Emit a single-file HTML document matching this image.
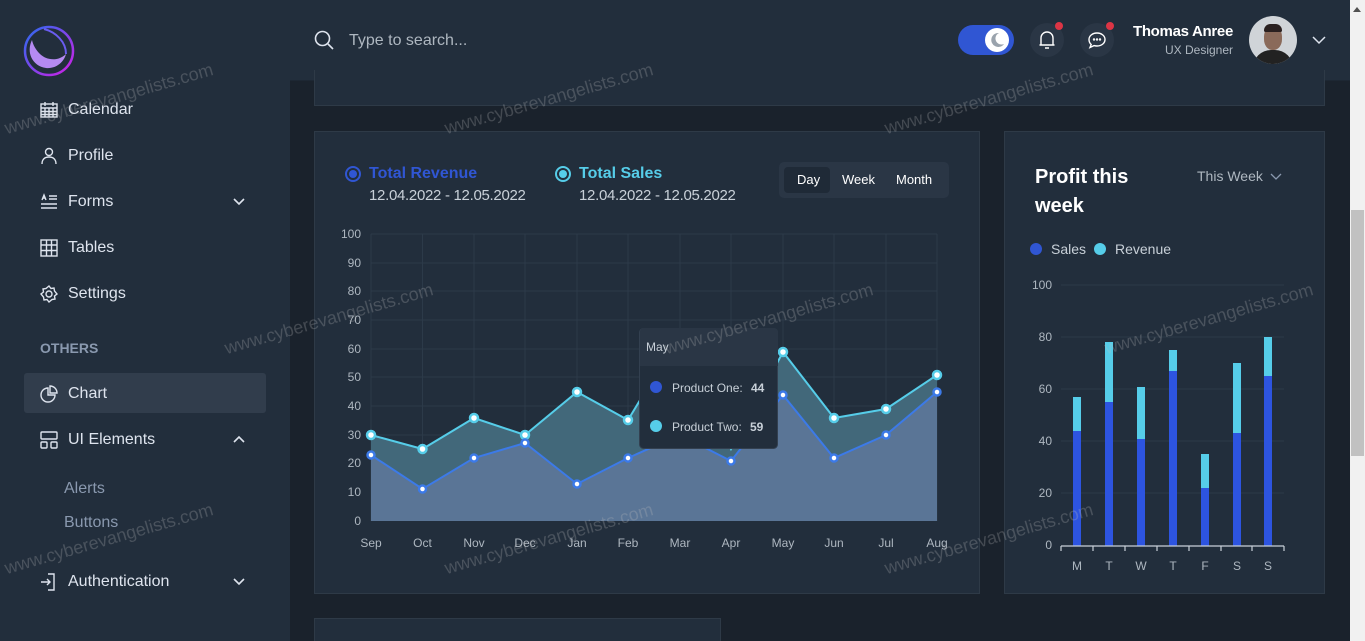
<!DOCTYPE html>
<html><head><meta charset="utf-8"><style>
*{margin:0;padding:0;box-sizing:border-box}
html{width:1365px;height:641px;overflow:hidden}
body{width:1365px;height:641px;overflow:hidden;background:#1a222c;font-family:"Liberation Sans",sans-serif;position:relative;color:#dee4ee}
.abs{position:absolute}
#side{left:0;top:0;width:290px;height:641px;background:#222e3c}
#head{left:290px;top:0;width:1060px;height:80px;background:#222e3c;box-shadow:0 1px 0 #1d2733}
.card{position:absolute;background:#222e3c;border:1px solid #2e3a47}
.nav{position:absolute;left:40px;font-size:16px;color:#dee4ee;display:flex;align-items:center;gap:10px}
.nav svg{width:18px;height:18px}
.chev{position:absolute;left:232px;width:14px;height:14px}
.wm{position:absolute;color:rgba(190,190,190,.25);font-size:18px;transform:rotate(-16deg);transform-origin:left bottom;white-space:nowrap}
</style></head><body>
<div id="side" class="abs"></div>
<div id="head" class="abs"></div>
<svg class="abs" style="left:22px;top:24px" width="54" height="54" viewBox="0 0 54 54">
<defs><linearGradient id="lg" x1="0" y1="0" x2="1" y2="1"><stop offset="0" stop-color="#2a6cf0"/><stop offset="1" stop-color="#d21fe6"/></linearGradient></defs>
<circle cx="27" cy="27" r="24" fill="none" stroke="url(#lg)" stroke-width="2.5"/>
<path d="M10 16 C4 28 10 42 24 44 C34 45 42 38 44 30 C36 38 24 36 18 30 C14 26 11 21 10 16Z" fill="#b58af2"/>
<path d="M22 5 C34 8 44 18 44 30" fill="none" stroke="#6a5cf0" stroke-width="2"/>
</svg>
<div class="nav" style="top:101px"><svg viewBox="0 0 18 18" fill="none" stroke="#dee4ee" stroke-width="1.4"><rect x="1" y="3" width="16" height="13"/><path d="M1 7h16M5 1v4M13 1v4M1 10.5h16M1 13.5h16M5 7v9M9 7v9M13 7v9"/></svg>Calendar</div>
<div class="nav" style="top:147px"><svg viewBox="0 0 18 18" fill="none" stroke="#dee4ee" stroke-width="1.4"><circle cx="9" cy="5" r="3.5"/><path d="M2 17c0-5 3-7 7-7s7 2 7 7"/></svg>Profile</div>
<div class="nav" style="top:193px"><svg viewBox="0 0 18 18" fill="none" stroke="#dee4ee" stroke-width="1.4"><path d="M2 7l2-5 2 5M3 5h2M9 3h8M9 6h8M1 11h16M1 15h16"/></svg>Forms</div>
<svg class="chev" style="top:194px" viewBox="0 0 14 14" fill="none" stroke="#dee4ee" stroke-width="1.6"><path d="M2 5l5 5 5-5"/></svg>
<div class="nav" style="top:239px"><svg viewBox="0 0 18 18" fill="none" stroke="#dee4ee" stroke-width="1.4"><rect x="1" y="1" width="16" height="16"/><path d="M1 6h16M1 11.5h16M6.5 1v16M11.5 1v16"/></svg>Tables</div>
<div class="nav" style="top:285px"><svg viewBox="0 0 18 18" fill="none" stroke="#dee4ee" stroke-width="1.4"><circle cx="9" cy="9" r="3"/><path d="M9 1l2 2.5 3-.5.5 3L17 9l-2.5 2 .5 3-3 .5L9 17l-2-2.5-3 .5-.5-3L1 9l2.5-2-.5-3 3-.5z"/></svg>Settings</div>
<div class="abs" style="left:40px;top:340px;font-size:14px;font-weight:bold;color:#8a99af">OTHERS</div>
<div class="abs" style="left:24px;top:373px;width:242px;height:40px;background:#313d4c;border-radius:3px"></div>
<div class="nav" style="top:385px"><svg viewBox="0 0 18 18" fill="none" stroke="#dee4ee" stroke-width="1.4"><path d="M8 3a7 7 0 1 0 7 7H8z"/><path d="M10 1a7 7 0 0 1 7 7h-7z"/></svg>Chart</div>
<div class="nav" style="top:431px"><svg viewBox="0 0 18 18" fill="none" stroke="#dee4ee" stroke-width="1.4"><rect x="1" y="1" width="16" height="7" rx="1"/><rect x="1" y="11" width="6" height="6" rx="1"/><rect x="11" y="11" width="6" height="6" rx="1"/></svg>UI Elements</div>
<svg class="chev" style="top:432px" viewBox="0 0 14 14" fill="none" stroke="#dee4ee" stroke-width="1.6"><path d="M2 10l5-5 5 5"/></svg>
<div class="abs" style="left:64px;top:480px;font-size:16px;color:#8a99af">Alerts</div>
<div class="abs" style="left:64px;top:514px;font-size:16px;color:#8a99af">Buttons</div>
<div class="nav" style="top:573px"><svg viewBox="0 0 18 18" fill="none" stroke="#dee4ee" stroke-width="1.4"><path d="M8 1h6v16H8M1 9h9M7 6l3 3-3 3"/></svg>Authentication</div>
<svg class="chev" style="top:574px" viewBox="0 0 14 14" fill="none" stroke="#dee4ee" stroke-width="1.6"><path d="M2 5l5 5 5-5"/></svg>

<svg class="abs" style="left:314px;top:30px" width="20" height="20" viewBox="0 0 20 20" fill="none" stroke="#dee4ee" stroke-width="1.6"><circle cx="8.5" cy="8.5" r="7"/><path d="M14 14l5 5"/></svg>
<div class="abs" style="left:349px;top:32px;font-size:16px;color:#aeb7c0">Type to search...</div>
<div class="abs" style="left:958px;top:25px;width:56px;height:30px;border-radius:15px;background:#3056d3"></div>
<div class="abs" style="left:985px;top:28px;width:24px;height:24px;border-radius:50%;background:#fff"></div>
<svg class="abs" style="left:989px;top:32px" width="16" height="16" viewBox="0 0 16 16"><path d="M10 1a7 7 0 1 0 5 11A6 6 0 0 1 10 1z" fill="#9aa3ad"/></svg>
<div class="abs" style="left:1030px;top:23px;width:34px;height:34px;border-radius:50%;background:#2a3645"></div>
<svg class="abs" style="left:1039px;top:30px" width="16" height="20" viewBox="0 0 16 20" fill="none" stroke="#fff" stroke-width="1.4"><path d="M2 15V8a6 6 0 0 1 12 0v7zM0.5 15h15M6 18h4"/></svg>
<div class="abs" style="left:1055px;top:22px;width:8px;height:8px;border-radius:50%;background:#dc3545"></div>
<div class="abs" style="left:1080px;top:23px;width:34px;height:34px;border-radius:50%;background:#2a3645"></div>
<svg class="abs" style="left:1088px;top:31px" width="18" height="18" viewBox="0 0 18 18" fill="none" stroke="#fff" stroke-width="1.4"><path d="M9 2c4.5 0 8 2.8 8 6.5S13.5 15 9 15c-1 0-2-.1-3-.4L2 16.5l1.2-3C1.8 12.3 1 10.5 1 8.5 1 4.8 4.5 2 9 2z"/><circle cx="6" cy="8.5" r=".5"/><circle cx="9" cy="8.5" r=".5"/><circle cx="12" cy="8.5" r=".5"/></svg>
<div class="abs" style="left:1106px;top:22px;width:8px;height:8px;border-radius:50%;background:#dc3545"></div>
<div class="abs" style="left:1080px;top:23px;width:153px;text-align:right;font-size:15px;font-weight:bold;color:#fff;letter-spacing:-0.3px">Thomas Anree</div>
<div class="abs" style="left:1100px;top:43px;width:133px;text-align:right;font-size:12px;color:#aeb7c0">UX Designer</div>
<div class="abs" style="left:1249px;top:16px;width:48px;height:48px;border-radius:50%;background:#d0d4d8;overflow:hidden">
<div class="abs" style="left:15px;top:10px;width:18px;height:24px;border-radius:45%;background:#8a6a5a"></div>
<div class="abs" style="left:15px;top:8px;width:18px;height:8px;border-radius:8px 8px 2px 2px;background:#2a2020"></div>
<div class="abs" style="left:4px;top:34px;width:40px;height:20px;border-radius:18px 18px 0 0;background:#222"></div></div>
<svg class="abs" style="left:1312px;top:34px" width="14" height="12" viewBox="0 0 14 12" fill="none" stroke="#dee4ee" stroke-width="1.5"><path d="M1 3l6 6 6-6"/></svg>

<div class="card" style="left:314px;top:70px;width:1011px;height:36px;border-top:none"></div>

<div class="card" style="left:314px;top:131px;width:666px;height:463px"></div>
<div class="abs" style="left:345px;top:166px;width:16px;height:16px;border-radius:50%;border:2px solid #3056d3"></div>
<div class="abs" style="left:349px;top:170px;width:8px;height:8px;border-radius:50%;background:#3056d3"></div>
<div class="abs" style="left:369px;top:165px;font-size:16px;font-weight:bold;color:#3056d3">Total Revenue</div>
<div class="abs" style="left:369px;top:187px;font-size:15px;color:#c8d0d8;letter-spacing:-0.3px">12.04.2022 - 12.05.2022</div>
<div class="abs" style="left:555px;top:166px;width:16px;height:16px;border-radius:50%;border:2px solid #56cde9"></div>
<div class="abs" style="left:559px;top:170px;width:8px;height:8px;border-radius:50%;background:#56cde9"></div>
<div class="abs" style="left:579px;top:165px;font-size:16px;font-weight:bold;color:#56cde9">Total Sales</div>
<div class="abs" style="left:579px;top:187px;font-size:15px;color:#c8d0d8;letter-spacing:-0.3px">12.04.2022 - 12.05.2022</div>
<div class="abs" style="left:779px;top:162px;width:170px;height:36px;border-radius:5px;background:#2a3645"></div>
<div class="abs" style="left:784px;top:167px;width:46px;height:26px;border-radius:4px;background:#1f2a37"></div>
<div class="abs" style="left:797px;top:172px;font-size:13px;color:#fff">Day</div>
<div class="abs" style="left:842px;top:172px;font-size:13px;color:#fff">Week</div>
<div class="abs" style="left:896px;top:172px;font-size:13px;color:#fff">Month</div>

<svg class="abs" style="left:0;top:0" width="1365" height="641" font-family="Liberation Sans, sans-serif">
<g stroke="#2c3a49" stroke-width="1">
<path d="M371 234H937M371 263H937M371 291H937M371 320H937M371 349H937M371 377H937M371 406H937M371 435H937M371 463H937M371 492H937"/>
<path d="M371 234V521M422.5 234V521M474 234V521M525 234V521M577 234V521M628 234V521M680 234V521M731 234V521M783 234V521M834 234V521M886 234V521M937 234V521"/>
</g>
<g fill="#aeb7c0" font-size="12" text-anchor="end">
<text x="361" y="238">100</text><text x="361" y="267">90</text><text x="361" y="295">80</text><text x="361" y="324">70</text><text x="361" y="353">60</text><text x="361" y="381">50</text><text x="361" y="410">40</text><text x="361" y="439">30</text><text x="361" y="467">20</text><text x="361" y="496">10</text><text x="361" y="525">0</text>
</g>
<g fill="#aeb7c0" font-size="12" text-anchor="middle">
<text x="371" y="547">Sep</text><text x="422.5" y="547">Oct</text><text x="474" y="547">Nov</text><text x="525" y="547">Dec</text><text x="577" y="547">Jan</text><text x="628" y="547">Feb</text><text x="680" y="547">Mar</text><text x="731" y="547">Apr</text><text x="783" y="547">May</text><text x="834" y="547">Jun</text><text x="886" y="547">Jul</text><text x="937" y="547">Aug</text>
</g>
<polygon points="371,435 422.5,449 474,418 525,435 577,392 628,420 680,334 731,449 783,352 834,418 886,409 937,375 937,521 371,521" fill="#42687a"/>
<polygon points="371,455 422.5,489 474,458 525,443 577,484 628,458 680,435 731,461 783,395 834,458 886,435 937,392 937,521 371,521" fill="#5a7596"/>
<polyline points="371,435 422.5,449 474,418 525,435 577,392 628,420 680,334 731,449 783,352 834,418 886,409 937,375" fill="none" stroke="#56cde9" stroke-width="2"/>
<polyline points="371,455 422.5,489 474,458 525,443 577,484 628,458 680,435 731,461 783,395 834,458 886,435 937,392" fill="none" stroke="#3c7ae8" stroke-width="2"/>
<g fill="#fff" stroke="#56cde9" stroke-width="2.5">
<circle cx="371" cy="435" r="4"/><circle cx="422.5" cy="449" r="4"/><circle cx="474" cy="418" r="4"/><circle cx="525" cy="435" r="4"/><circle cx="577" cy="392" r="4"/><circle cx="628" cy="420" r="4"/><circle cx="783" cy="352" r="4"/><circle cx="834" cy="418" r="4"/><circle cx="886" cy="409" r="4"/><circle cx="937" cy="375" r="4"/></g>
<g fill="#fff" stroke="#3c7ae8" stroke-width="2.5">
<circle cx="371" cy="455" r="3.5"/><circle cx="422.5" cy="489" r="3.5"/><circle cx="474" cy="458" r="3.5"/><circle cx="525" cy="443" r="3.5"/><circle cx="577" cy="484" r="3.5"/><circle cx="628" cy="458" r="3.5"/><circle cx="731" cy="461" r="3.5"/><circle cx="783" cy="395" r="3.5"/><circle cx="834" cy="458" r="3.5"/><circle cx="886" cy="435" r="3.5"/><circle cx="937" cy="392" r="3.5"/></g>
<rect x="639.5" y="328.5" width="138" height="120" rx="4" fill="#222e3c" stroke="#334050"/>
<path d="M640 332a4 4 0 0 1 4-4h130a4 4 0 0 1 4 4v34H640z" fill="#2a3645"/>
<text x="646" y="351" fill="#c8d0d8" font-size="12">May</text>
<circle cx="656" cy="387" r="6" fill="#3056d3"/><text x="672" y="392" fill="#c8d0d8" font-size="12">Product One:</text><text x="751" y="392" fill="#c8d0d8" font-size="12" font-weight="bold">44</text>
<circle cx="656" cy="426" r="6" fill="#56cde9"/><text x="672" y="431" fill="#c8d0d8" font-size="12">Product Two:</text><text x="750" y="431" fill="#c8d0d8" font-size="12" font-weight="bold">59</text>
</svg>

<div class="card" style="left:1004px;top:131px;width:321px;height:463px"></div>
<div class="abs" style="left:1035px;top:163px;font-size:20px;font-weight:bold;color:#fff;line-height:29px;width:120px">Profit this week</div>
<div class="abs" style="left:1197px;top:168px;font-size:14px;color:#aeb7c0">This Week</div>
<svg class="abs" style="left:1270px;top:171px" width="12" height="10" viewBox="0 0 12 10" fill="none" stroke="#8a99af" stroke-width="1.3"><path d="M1 3l5 5 5-5"/></svg>
<div class="abs" style="left:1030px;top:243px;width:12px;height:12px;border-radius:50%;background:#3056d3"></div>
<div class="abs" style="left:1051px;top:241px;font-size:14px;color:#c8d0d8">Sales</div>
<div class="abs" style="left:1094px;top:243px;width:12px;height:12px;border-radius:50%;background:#56cde9"></div>
<div class="abs" style="left:1115px;top:241px;font-size:14px;color:#c8d0d8">Revenue</div>
<svg class="abs" style="left:0;top:0" width="1365" height="641" font-family="Liberation Sans, sans-serif">
<g stroke="#2c3a49"><path d="M1061 285H1284M1061 337H1284M1061 389H1284M1061 441H1284M1061 493H1284"/></g>
<g fill="#aeb7c0" font-size="12" text-anchor="end"><text x="1052" y="289">100</text><text x="1052" y="341">80</text><text x="1052" y="393">60</text><text x="1052" y="445">40</text><text x="1052" y="497">20</text><text x="1052" y="549">0</text></g>
<g fill="#56cde9"><rect x="1073" y="397" width="8" height="149"/><rect x="1105" y="342" width="8" height="204"/><rect x="1137" y="387" width="8" height="159"/><rect x="1169" y="350" width="8" height="196"/><rect x="1201" y="454" width="8" height="92"/><rect x="1233" y="363" width="8" height="183"/><rect x="1264" y="337" width="8" height="209"/></g>
<g fill="#2d54e0"><rect x="1073" y="431" width="8" height="115"/><rect x="1105" y="402" width="8" height="144"/><rect x="1137" y="439" width="8" height="107"/><rect x="1169" y="371" width="8" height="175"/><rect x="1201" y="488" width="8" height="58"/><rect x="1233" y="433" width="8" height="113"/><rect x="1264" y="376" width="8" height="170"/></g>
<path d="M1061 546H1284M1061 546v5M1093 546v5M1125 546v5M1157 546v5M1189 546v5M1221 546v5M1252 546v5M1284 546v5" stroke="#c8d0d8" stroke-width="1.2" fill="none"/>
<g fill="#aeb7c0" font-size="12" text-anchor="middle"><text x="1077" y="570">M</text><text x="1109" y="570">T</text><text x="1141" y="570">W</text><text x="1173" y="570">T</text><text x="1205" y="570">F</text><text x="1237" y="570">S</text><text x="1268" y="570">S</text></g>
</svg>

<div class="card" style="left:314px;top:618px;width:407px;height:23px;border-bottom:none"></div>
<div class="abs" style="left:1350px;top:0;width:15px;height:641px;background:#f1f1f1"></div>
<div class="abs" style="left:1351px;top:210px;width:13px;height:246px;background:#c1c1c1"></div>
<div class="abs" style="left:1353px;top:7px;width:0;height:0;border-left:4px solid transparent;border-right:4px solid transparent;border-bottom:5px solid #505050"></div>
<div class="wm" style="left:8px;top:118px">www.cyberevangelists.com</div>
<div class="wm" style="left:448px;top:118px">www.cyberevangelists.com</div>
<div class="wm" style="left:888px;top:118px">www.cyberevangelists.com</div>
<div class="wm" style="left:228px;top:338px">www.cyberevangelists.com</div>
<div class="wm" style="left:668px;top:338px">www.cyberevangelists.com</div>
<div class="wm" style="left:1108px;top:338px">www.cyberevangelists.com</div>
<div class="wm" style="left:8px;top:558px">www.cyberevangelists.com</div>
<div class="wm" style="left:448px;top:558px">www.cyberevangelists.com</div>
<div class="wm" style="left:888px;top:558px">www.cyberevangelists.com</div>
</body></html>
